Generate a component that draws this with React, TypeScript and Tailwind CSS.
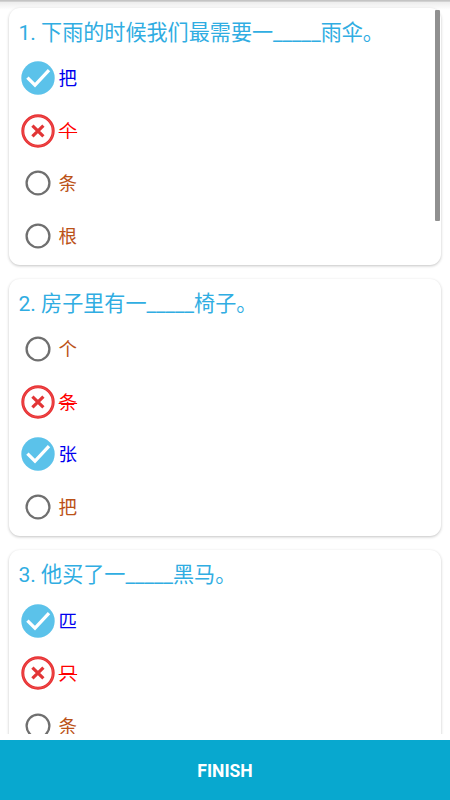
type Status = 'correct' | 'wrong' | 'idle';

interface Question {
  title: string;
  options: { text: string; status: Status }[];
}

const questions: Question[] = [
  {
    title: '1. 下雨的时候我们最需要一_____雨伞。',
    options: [
      { text: '把', status: 'correct' },
      { text: '个', status: 'wrong' },
      { text: '条', status: 'idle' },
      { text: '根', status: 'idle' },
    ],
  },
  {
    title: '2. 房子里有一_____椅子。',
    options: [
      { text: '个', status: 'idle' },
      { text: '条', status: 'wrong' },
      { text: '张', status: 'correct' },
      { text: '把', status: 'idle' },
    ],
  },
  {
    title: '3. 他买了一_____黑马。',
    options: [
      { text: '匹', status: 'correct' },
      { text: '只', status: 'wrong' },
      { text: '条', status: 'idle' },
    ],
  },
];

const textStyles: Record<Status, string> = {
  correct: 'text-[#0000ee]',
  wrong: 'text-[#ff0000] line-through decoration-[1px]',
  idle: 'text-[#bb5218]',
};

function StatusIcon({ status }: { status: Status }) {
  return (
    <svg viewBox="0 0 34 34" className="size-[34px] shrink-0" fill="none">
      {status === 'correct' && (
        <>
          <circle cx="17" cy="17" r="16.7" fill="#5bc2ea" />
          <path d="M6.4 16.6 L14 24.2 L28 9.2" stroke="#fff" strokeWidth="3.3" />
        </>
      )}
      {status === 'wrong' && (
        <>
          <circle cx="17" cy="17" r="15.2" stroke="#e83032" strokeWidth="3" />
          <circle cx="17" cy="17" r="15.2" stroke="#ee5a5a" strokeWidth="0.6" />
          <path d="M11.4 11.6 L22.4 22.4 M22.4 11.6 L11.4 22.4" stroke="#e23536" strokeWidth="3.2" />
        </>
      )}
      {status === 'idle' && <circle cx="17" cy="17" r="11.4" stroke="#6f6f6f" strokeWidth="2.3" />}
    </svg>
  );
}

function QuestionCard({ title, options }: Question) {
  return (
    <section className="h-[257px] shrink-0 rounded-[11px] bg-white pt-[9px] shadow-[0_1px_3px_rgba(0,0,0,0.24)]">
      <h2 className="h-[35px] pl-[9.4px] text-[21.1px] leading-[32px] font-normal whitespace-nowrap text-[#30ade2]">
        {title}
      </h2>
      <ul>
        {options.map((option, i) => (
          <li key={i} className="flex h-[52.5px] items-center gap-[3.4px] pl-[12.2px]">
            <StatusIcon status={option.status} />
            <span className={`pt-[2px] text-[18.5px] leading-[28px] ${textStyles[option.status]}`}>{option.text}</span>
          </li>
        ))}
      </ul>
    </section>
  );
}

export default function App() {
  return (
    <div className="flex h-[800px] w-[450px] flex-col overflow-hidden bg-white font-[Roboto,'Noto_Sans_CJK_SC',sans-serif]">
      <main className="relative h-[734px] overflow-hidden">
        <div className="absolute inset-x-0 top-0 h-[10px] bg-linear-to-b from-[#c4c4c4] from-[10%] via-[#eeeeee] via-[25%] to-white" />
        <div className="relative flex flex-col gap-[14.2px] px-[9px] pt-[8px]">
          {questions.map((question) => (
            <QuestionCard key={question.title} {...question} />
          ))}
        </div>
        <div className="absolute top-[10px] left-[435px] h-[211px] w-[5px] rounded-[1px] bg-[#909090]" />
      </main>
      <button className="mt-[6px] h-[60px] w-full bg-[#08a8cf] pt-[2px] text-[17.5px] font-bold text-white">
        FINISH
      </button>
    </div>
  );
}
